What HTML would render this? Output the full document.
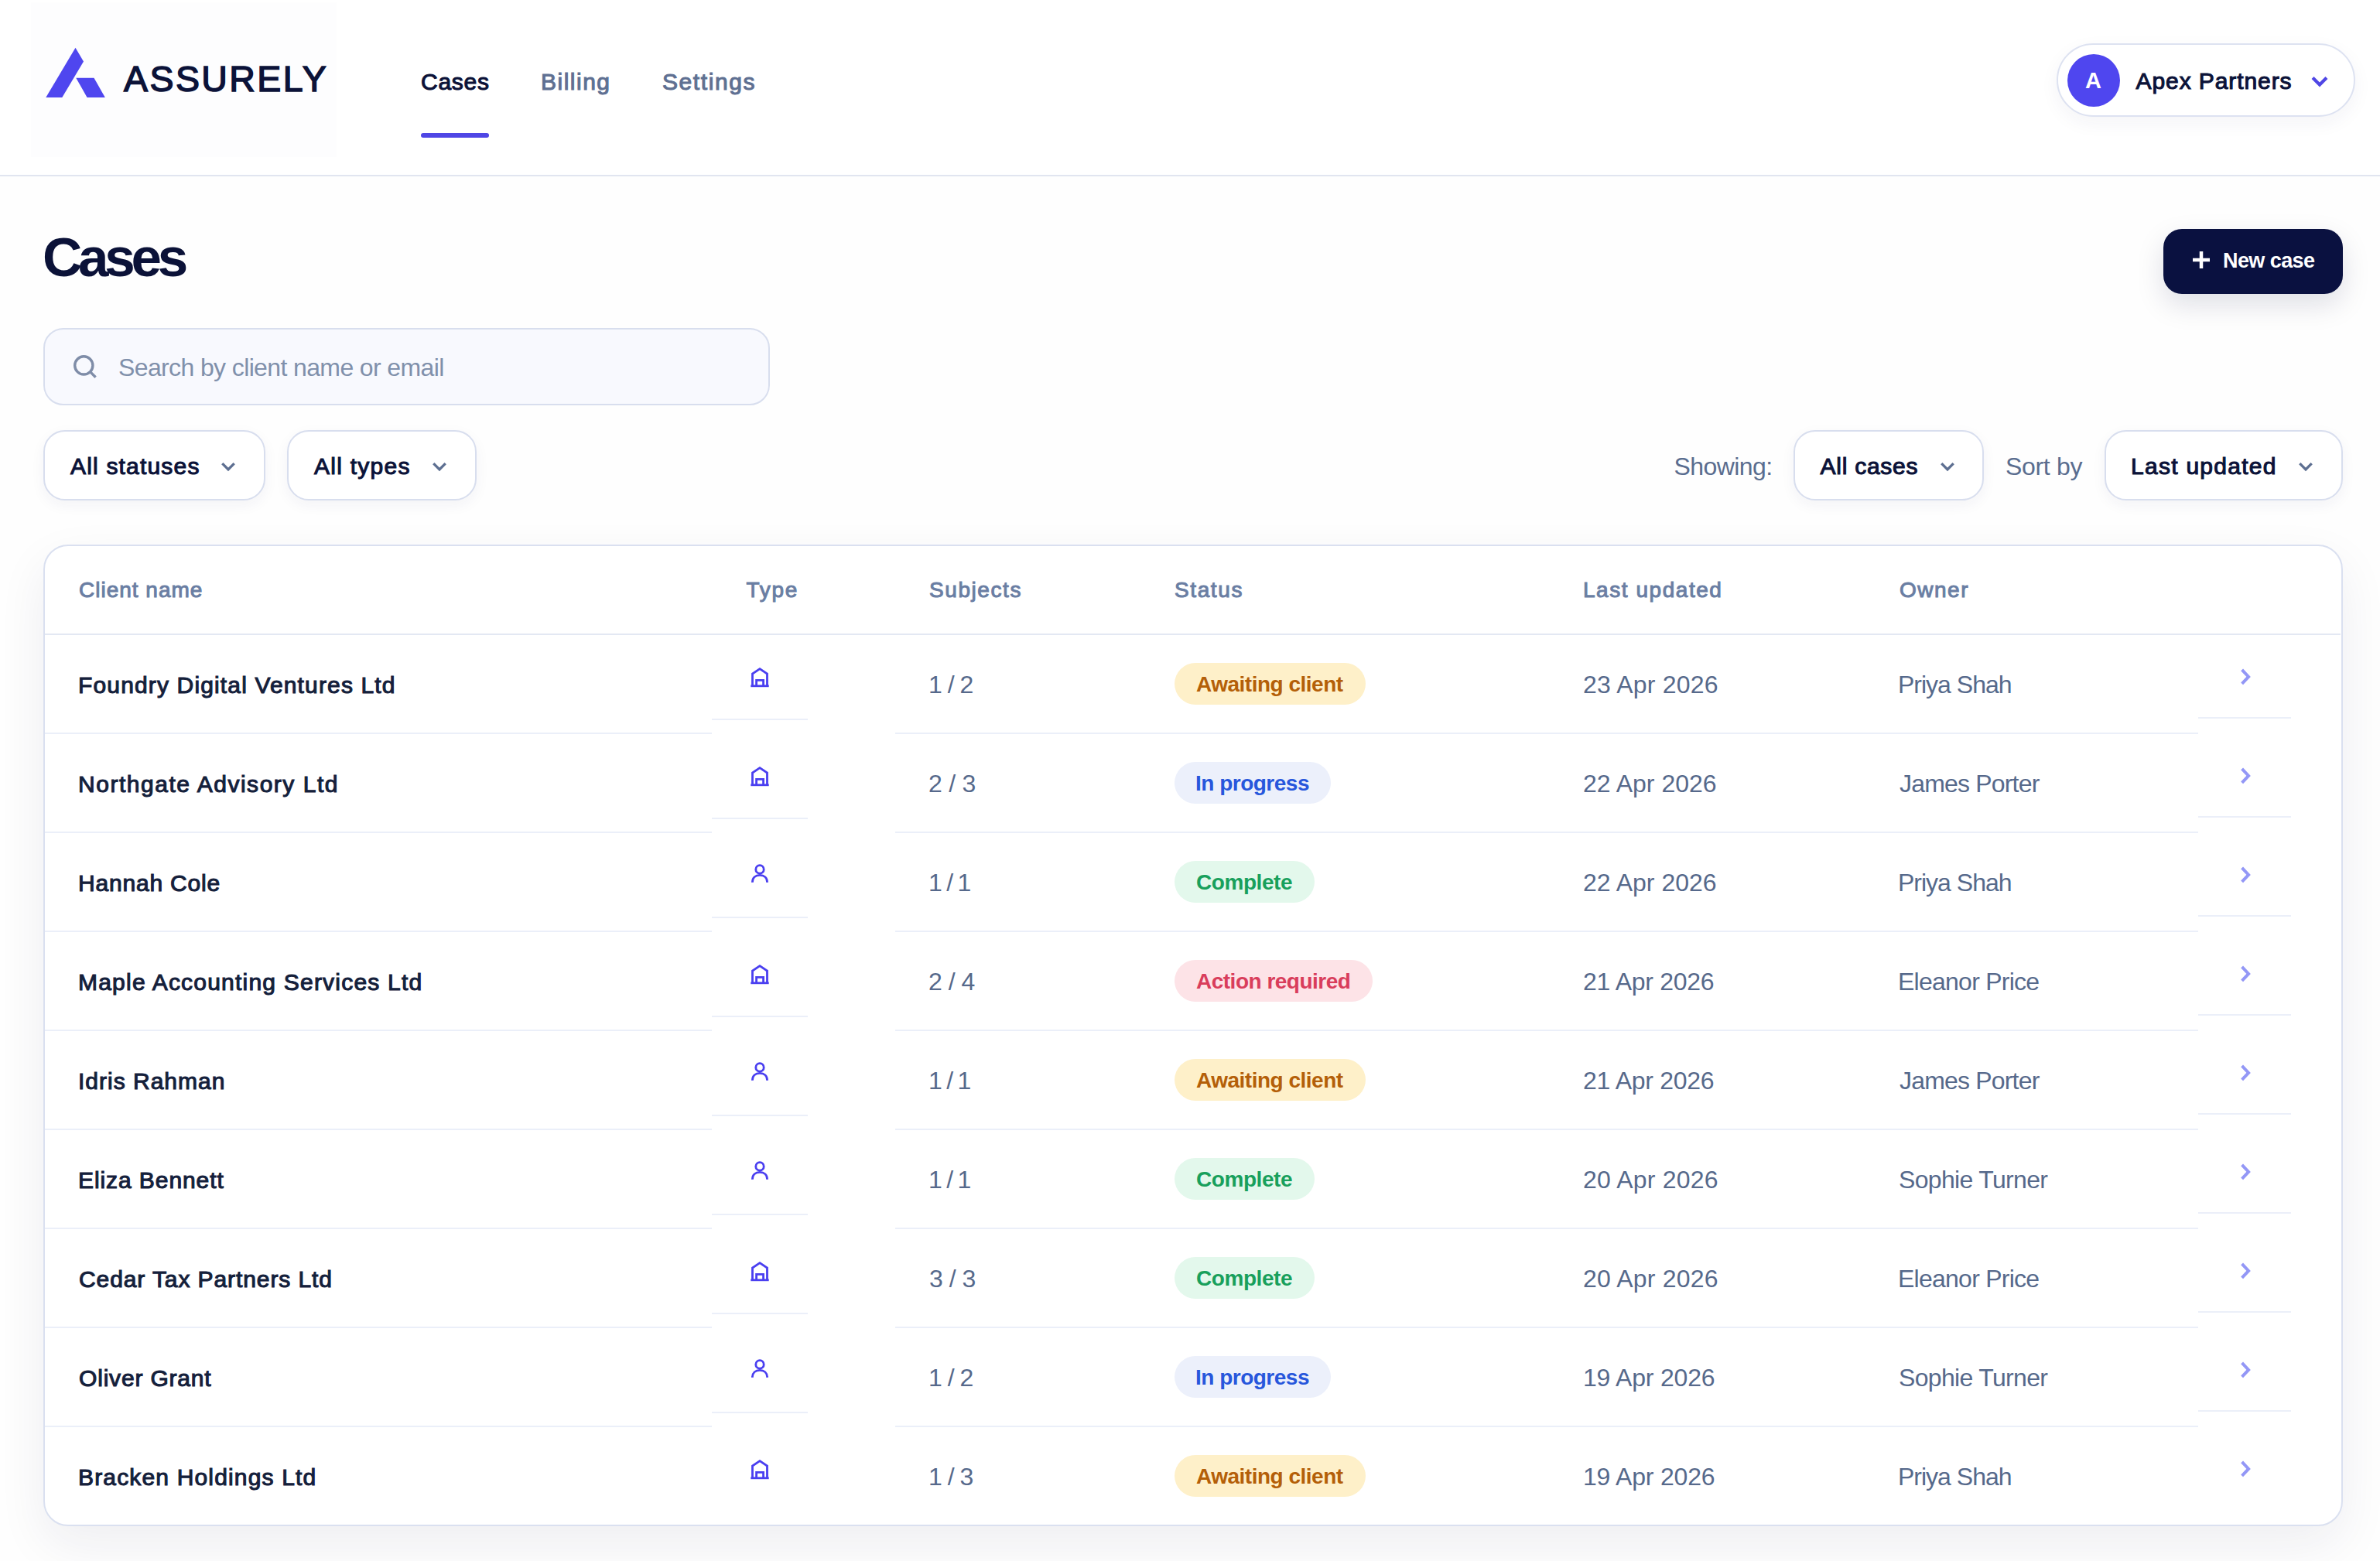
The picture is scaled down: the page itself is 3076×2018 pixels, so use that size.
<!DOCTYPE html>
<html><head><meta charset="utf-8"><title>Assurely - Cases</title>
<style>
html,body{margin:0;padding:0;}
body{width:3076px;height:2018px;position:relative;overflow:hidden;background:#fefefe;font-family:"Liberation Sans",sans-serif;}
.a{position:absolute;display:block;}
.t{position:absolute;white-space:nowrap;line-height:1;}
@media (max-width:1700px){html{zoom:0.5;}}
</style></head><body>
<div class="a" style="left:0;top:0;width:3076px;height:226px;background:#ffffff"></div>
<div class="a" style="left:0;top:226px;width:3076px;height:2px;background:#e1e5f0"></div>
<div class="a" style="left:40px;top:3px;width:395px;height:200px;background:#fdfdfe"></div>
<svg class="a" style="left:0;top:0" width="200" height="200" viewBox="0 0 200 200"><polygon points="59.3,126 97.5,61.8 108,79.5 80.3,126" fill="#4f46ef"/><polygon points="98.3,100.8 121.5,100.8 135.8,126 112.6,126" fill="#4f46ef"/></svg>
<div class="a" style="left:544px;top:172px;width:88px;height:6px;border-radius:3px;background:#4f46e5"></div>
<div class="a" style="left:2658px;top:56px;width:382px;height:91px;border:2px solid #dde2f1;border-radius:48px;background:#fff;box-shadow:0 8px 24px rgba(30,40,90,0.05)"></div>
<div class="a" style="left:2672px;top:70px;width:68px;height:68px;border-radius:50%;background:#4f46ef"></div>
<svg class="a" style="left:2980.0px;top:91.0px" width="36" height="29" viewBox="2980.00 91.00 36 29"><path d="M2989.05 100.49 L2998.00 109.43 L3006.95 100.49" fill="none" stroke="#4f46e5" stroke-width="4.2" stroke-linecap="butt" stroke-linejoin="miter"/></svg>
<div class="a" style="left:2796px;top:296px;width:232px;height:84px;border-radius:24px;background:#0a1140;box-shadow:0 14px 36px rgba(10,17,64,0.13)"></div>
<svg class="a" style="left:2834px;top:325px" width="22" height="22" viewBox="0 0 22 22"><path d="M11 0V22M0 11H22" stroke="#fff" stroke-width="4.5"/></svg>
<div class="a" style="left:56px;top:424px;width:935px;height:96px;border:2px solid #d8deee;border-radius:26px;background:#f8f9fe"></div>
<svg class="a" style="left:90px;top:454px" width="40" height="40" viewBox="0 0 40 40"><circle cx="18.3" cy="18.4" r="11.6" fill="none" stroke="#7f8da8" stroke-width="3.4"/><path d="M26.3 26.4 L33.6 33.7" stroke="#7f8da8" stroke-width="3.4"/></svg>
<div class="a" style="left:56.0px;top:556px;width:283.0px;height:87px;border:2px solid #d8deee;border-radius:28px;background:#fff;box-shadow:0 6px 18px rgba(30,40,90,0.05)"></div>
<div class="a" style="left:371.0px;top:556px;width:241.0px;height:87px;border:2px solid #d8deee;border-radius:28px;background:#fff;box-shadow:0 6px 18px rgba(30,40,90,0.05)"></div>
<div class="a" style="left:2318.0px;top:556px;width:242.0px;height:87px;border:2px solid #d8deee;border-radius:28px;background:#fff;box-shadow:0 6px 18px rgba(30,40,90,0.05)"></div>
<div class="a" style="left:2720.0px;top:556px;width:304.0px;height:87px;border:2px solid #d8deee;border-radius:28px;background:#fff;box-shadow:0 6px 18px rgba(30,40,90,0.05)"></div>
<svg class="a" style="left:278.0px;top:590.0px" width="34" height="27" viewBox="278.00 590.00 34 27"><path d="M287.30 599.17 L295.00 606.87 L302.70 599.17" fill="none" stroke="#5d6f91" stroke-width="3.3" stroke-linecap="butt" stroke-linejoin="miter"/></svg>
<svg class="a" style="left:551.0px;top:590.0px" width="34" height="27" viewBox="551.00 590.00 34 27"><path d="M560.30 599.17 L568.00 606.87 L575.70 599.17" fill="none" stroke="#5d6f91" stroke-width="3.3" stroke-linecap="butt" stroke-linejoin="miter"/></svg>
<svg class="a" style="left:2500.0px;top:590.0px" width="34" height="27" viewBox="2500.00 590.00 34 27"><path d="M2509.30 599.17 L2517.00 606.87 L2524.70 599.17" fill="none" stroke="#5d6f91" stroke-width="3.3" stroke-linecap="butt" stroke-linejoin="miter"/></svg>
<svg class="a" style="left:2963.0px;top:590.0px" width="34" height="27" viewBox="2963.00 590.00 34 27"><path d="M2972.30 599.17 L2980.00 606.87 L2987.70 599.17" fill="none" stroke="#5d6f91" stroke-width="3.3" stroke-linecap="butt" stroke-linejoin="miter"/></svg>
<div class="a" style="left:56px;top:704px;width:2968px;height:1265px;border:2px solid #dae0f0;border-radius:32px;background:#fff;box-shadow:0 24px 64px rgba(30,35,70,0.07)"></div>
<div class="a" style="left:58px;top:819px;width:2967px;height:2px;background:#e3e8f3"></div>
<div class="a" style="left:58px;top:947px;width:862px;height:2px;background:#ebeff9"></div>
<div class="a" style="left:1157px;top:947px;width:1684px;height:2px;background:#ebeff9"></div>
<div class="a" style="left:920px;top:929px;width:124px;height:2px;background:#ebeff9"></div>
<div class="a" style="left:2841px;top:927px;width:120px;height:2px;background:#ebeff9"></div>
<svg class="a" style="left:966px;top:859px" width="32" height="32" viewBox="0 0 32 32"><path d="M6.5 27.5 V12 L16 5.6 L25.5 12 V27.5" fill="none" stroke="#4a3ff0" stroke-width="2.8" stroke-linejoin="miter"/><path d="M4.3 27.8 H27.7" stroke="#4a3ff0" stroke-width="2.8"/><path d="M11.6 27.5 V20.4 H20.6 V27.5" fill="none" stroke="#4a3ff0" stroke-width="2.8"/></svg>
<div class="a" style="left:1518px;top:857px;width:247.0px;height:54px;border-radius:27px;background:#fef0c9"></div>
<svg class="a" style="left:2890px;top:859px" width="24" height="32" viewBox="0 0 24 32"><path d="M7.6 6.9 L16.1 15.9 L7.6 24.9" fill="none" stroke="#9397f6" stroke-width="4"/></svg>
<div class="a" style="left:58px;top:1075px;width:862px;height:2px;background:#ebeff9"></div>
<div class="a" style="left:1157px;top:1075px;width:1684px;height:2px;background:#ebeff9"></div>
<div class="a" style="left:920px;top:1057px;width:124px;height:2px;background:#ebeff9"></div>
<div class="a" style="left:2841px;top:1055px;width:120px;height:2px;background:#ebeff9"></div>
<svg class="a" style="left:966px;top:987px" width="32" height="32" viewBox="0 0 32 32"><path d="M6.5 27.5 V12 L16 5.6 L25.5 12 V27.5" fill="none" stroke="#4a3ff0" stroke-width="2.8" stroke-linejoin="miter"/><path d="M4.3 27.8 H27.7" stroke="#4a3ff0" stroke-width="2.8"/><path d="M11.6 27.5 V20.4 H20.6 V27.5" fill="none" stroke="#4a3ff0" stroke-width="2.8"/></svg>
<div class="a" style="left:1518px;top:985px;width:201.5px;height:54px;border-radius:27px;background:#ecf0fb"></div>
<svg class="a" style="left:2890px;top:987px" width="24" height="32" viewBox="0 0 24 32"><path d="M7.6 6.9 L16.1 15.9 L7.6 24.9" fill="none" stroke="#9397f6" stroke-width="4"/></svg>
<div class="a" style="left:58px;top:1203px;width:862px;height:2px;background:#ebeff9"></div>
<div class="a" style="left:1157px;top:1203px;width:1684px;height:2px;background:#ebeff9"></div>
<div class="a" style="left:920px;top:1185px;width:124px;height:2px;background:#ebeff9"></div>
<div class="a" style="left:2841px;top:1183px;width:120px;height:2px;background:#ebeff9"></div>
<svg class="a" style="left:966px;top:1115px" width="32" height="32" viewBox="0 0 32 32"><circle cx="16" cy="8.9" r="5.2" fill="none" stroke="#4a3ff0" stroke-width="2.8"/><path d="M6.4 25.8 C6.4 19.6 10.6 16.4 16 16.4 C21.4 16.4 25.6 19.6 25.6 25.8" fill="none" stroke="#4a3ff0" stroke-width="2.8"/></svg>
<div class="a" style="left:1518px;top:1113px;width:181.0px;height:54px;border-radius:27px;background:#e3f8ec"></div>
<svg class="a" style="left:2890px;top:1115px" width="24" height="32" viewBox="0 0 24 32"><path d="M7.6 6.9 L16.1 15.9 L7.6 24.9" fill="none" stroke="#9397f6" stroke-width="4"/></svg>
<div class="a" style="left:58px;top:1331px;width:862px;height:2px;background:#ebeff9"></div>
<div class="a" style="left:1157px;top:1331px;width:1684px;height:2px;background:#ebeff9"></div>
<div class="a" style="left:920px;top:1313px;width:124px;height:2px;background:#ebeff9"></div>
<div class="a" style="left:2841px;top:1311px;width:120px;height:2px;background:#ebeff9"></div>
<svg class="a" style="left:966px;top:1243px" width="32" height="32" viewBox="0 0 32 32"><path d="M6.5 27.5 V12 L16 5.6 L25.5 12 V27.5" fill="none" stroke="#4a3ff0" stroke-width="2.8" stroke-linejoin="miter"/><path d="M4.3 27.8 H27.7" stroke="#4a3ff0" stroke-width="2.8"/><path d="M11.6 27.5 V20.4 H20.6 V27.5" fill="none" stroke="#4a3ff0" stroke-width="2.8"/></svg>
<div class="a" style="left:1518px;top:1241px;width:256.0px;height:54px;border-radius:27px;background:#fde3e7"></div>
<svg class="a" style="left:2890px;top:1243px" width="24" height="32" viewBox="0 0 24 32"><path d="M7.6 6.9 L16.1 15.9 L7.6 24.9" fill="none" stroke="#9397f6" stroke-width="4"/></svg>
<div class="a" style="left:58px;top:1459px;width:862px;height:2px;background:#ebeff9"></div>
<div class="a" style="left:1157px;top:1459px;width:1684px;height:2px;background:#ebeff9"></div>
<div class="a" style="left:920px;top:1441px;width:124px;height:2px;background:#ebeff9"></div>
<div class="a" style="left:2841px;top:1439px;width:120px;height:2px;background:#ebeff9"></div>
<svg class="a" style="left:966px;top:1371px" width="32" height="32" viewBox="0 0 32 32"><circle cx="16" cy="8.9" r="5.2" fill="none" stroke="#4a3ff0" stroke-width="2.8"/><path d="M6.4 25.8 C6.4 19.6 10.6 16.4 16 16.4 C21.4 16.4 25.6 19.6 25.6 25.8" fill="none" stroke="#4a3ff0" stroke-width="2.8"/></svg>
<div class="a" style="left:1518px;top:1369px;width:247.0px;height:54px;border-radius:27px;background:#fef0c9"></div>
<svg class="a" style="left:2890px;top:1371px" width="24" height="32" viewBox="0 0 24 32"><path d="M7.6 6.9 L16.1 15.9 L7.6 24.9" fill="none" stroke="#9397f6" stroke-width="4"/></svg>
<div class="a" style="left:58px;top:1587px;width:862px;height:2px;background:#ebeff9"></div>
<div class="a" style="left:1157px;top:1587px;width:1684px;height:2px;background:#ebeff9"></div>
<div class="a" style="left:920px;top:1569px;width:124px;height:2px;background:#ebeff9"></div>
<div class="a" style="left:2841px;top:1567px;width:120px;height:2px;background:#ebeff9"></div>
<svg class="a" style="left:966px;top:1499px" width="32" height="32" viewBox="0 0 32 32"><circle cx="16" cy="8.9" r="5.2" fill="none" stroke="#4a3ff0" stroke-width="2.8"/><path d="M6.4 25.8 C6.4 19.6 10.6 16.4 16 16.4 C21.4 16.4 25.6 19.6 25.6 25.8" fill="none" stroke="#4a3ff0" stroke-width="2.8"/></svg>
<div class="a" style="left:1518px;top:1497px;width:181.0px;height:54px;border-radius:27px;background:#e3f8ec"></div>
<svg class="a" style="left:2890px;top:1499px" width="24" height="32" viewBox="0 0 24 32"><path d="M7.6 6.9 L16.1 15.9 L7.6 24.9" fill="none" stroke="#9397f6" stroke-width="4"/></svg>
<div class="a" style="left:58px;top:1715px;width:862px;height:2px;background:#ebeff9"></div>
<div class="a" style="left:1157px;top:1715px;width:1684px;height:2px;background:#ebeff9"></div>
<div class="a" style="left:920px;top:1697px;width:124px;height:2px;background:#ebeff9"></div>
<div class="a" style="left:2841px;top:1695px;width:120px;height:2px;background:#ebeff9"></div>
<svg class="a" style="left:966px;top:1627px" width="32" height="32" viewBox="0 0 32 32"><path d="M6.5 27.5 V12 L16 5.6 L25.5 12 V27.5" fill="none" stroke="#4a3ff0" stroke-width="2.8" stroke-linejoin="miter"/><path d="M4.3 27.8 H27.7" stroke="#4a3ff0" stroke-width="2.8"/><path d="M11.6 27.5 V20.4 H20.6 V27.5" fill="none" stroke="#4a3ff0" stroke-width="2.8"/></svg>
<div class="a" style="left:1518px;top:1625px;width:181.0px;height:54px;border-radius:27px;background:#e3f8ec"></div>
<svg class="a" style="left:2890px;top:1627px" width="24" height="32" viewBox="0 0 24 32"><path d="M7.6 6.9 L16.1 15.9 L7.6 24.9" fill="none" stroke="#9397f6" stroke-width="4"/></svg>
<div class="a" style="left:58px;top:1843px;width:862px;height:2px;background:#ebeff9"></div>
<div class="a" style="left:1157px;top:1843px;width:1684px;height:2px;background:#ebeff9"></div>
<div class="a" style="left:920px;top:1825px;width:124px;height:2px;background:#ebeff9"></div>
<div class="a" style="left:2841px;top:1823px;width:120px;height:2px;background:#ebeff9"></div>
<svg class="a" style="left:966px;top:1755px" width="32" height="32" viewBox="0 0 32 32"><circle cx="16" cy="8.9" r="5.2" fill="none" stroke="#4a3ff0" stroke-width="2.8"/><path d="M6.4 25.8 C6.4 19.6 10.6 16.4 16 16.4 C21.4 16.4 25.6 19.6 25.6 25.8" fill="none" stroke="#4a3ff0" stroke-width="2.8"/></svg>
<div class="a" style="left:1518px;top:1753px;width:201.5px;height:54px;border-radius:27px;background:#ecf0fb"></div>
<svg class="a" style="left:2890px;top:1755px" width="24" height="32" viewBox="0 0 24 32"><path d="M7.6 6.9 L16.1 15.9 L7.6 24.9" fill="none" stroke="#9397f6" stroke-width="4"/></svg>
<svg class="a" style="left:966px;top:1883px" width="32" height="32" viewBox="0 0 32 32"><path d="M6.5 27.5 V12 L16 5.6 L25.5 12 V27.5" fill="none" stroke="#4a3ff0" stroke-width="2.8" stroke-linejoin="miter"/><path d="M4.3 27.8 H27.7" stroke="#4a3ff0" stroke-width="2.8"/><path d="M11.6 27.5 V20.4 H20.6 V27.5" fill="none" stroke="#4a3ff0" stroke-width="2.8"/></svg>
<div class="a" style="left:1518px;top:1881px;width:247.0px;height:54px;border-radius:27px;background:#fef0c9"></div>
<svg class="a" style="left:2890px;top:1883px" width="24" height="32" viewBox="0 0 24 32"><path d="M7.6 6.9 L16.1 15.9 L7.6 24.9" fill="none" stroke="#9397f6" stroke-width="4"/></svg>
<div class="t" id="logo" style="left:160.00px;top:78.84px;font-size:46.5px;color:#0b1238;letter-spacing:2.429px;-webkit-text-stroke:1.5px #0b1238;">ASSURELY</div>
<div class="t" id="nav1" style="left:544.00px;top:90.66px;font-size:30px;-webkit-text-stroke:1.08px #0b1238;color:#0b1238;letter-spacing:0.750px;">Cases</div>
<div class="t" id="nav2" style="left:699.00px;top:90.66px;font-size:30px;-webkit-text-stroke:1.08px #5f7092;color:#5f7092;letter-spacing:1.500px;">Billing</div>
<div class="t" id="nav3" style="left:856.00px;top:90.66px;font-size:30px;-webkit-text-stroke:1.08px #5f7092;color:#5f7092;letter-spacing:1.571px;">Settings</div>
<div class="t" id="apex" style="left:2760.50px;top:90.36px;font-size:30px;-webkit-text-stroke:1.08px #0b1238;color:#0b1238;letter-spacing:0.917px;">Apex Partners</div>
<div class="t" id="avA" style="left:2695.00px;top:90.45px;font-size:29px;font-weight:700;color:#ffffff;letter-spacing:0.000px;">A</div>
<div class="t" id="title" style="left:55.00px;top:296.90px;font-size:71px;font-weight:700;color:#0b1238;letter-spacing:-5.250px;">Cases</div>
<div class="t" id="newcase" style="left:2873.00px;top:324.14px;font-size:27px;font-weight:700;color:#ffffff;letter-spacing:-0.571px;">New case</div>
<div class="t" id="ph" style="left:153.00px;top:458.91px;font-size:32px;color:#8090ab;letter-spacing:-0.621px;">Search by client name or email</div>
<div class="t" id="f1" style="left:91.00px;top:588.00px;font-size:30px;-webkit-text-stroke:1.08px #0b1238;color:#0b1238;letter-spacing:1.182px;">All statuses</div>
<div class="t" id="f2" style="left:406.00px;top:588.00px;font-size:30px;-webkit-text-stroke:1.08px #0b1238;color:#0b1238;letter-spacing:1.250px;">All types</div>
<div class="t" id="show" style="left:2163.50px;top:586.91px;font-size:32px;color:#5a6d8f;letter-spacing:-0.571px;">Showing:</div>
<div class="t" id="f3" style="left:2352.50px;top:588.00px;font-size:30px;-webkit-text-stroke:1.08px #0b1238;color:#0b1238;letter-spacing:0.750px;">All cases</div>
<div class="t" id="sort" style="left:2592.00px;top:586.91px;font-size:32px;color:#5a6d8f;letter-spacing:-0.333px;">Sort by</div>
<div class="t" id="f4" style="left:2754.00px;top:588.00px;font-size:30px;-webkit-text-stroke:1.08px #0b1238;color:#0b1238;letter-spacing:1.273px;">Last updated</div>
<div class="t" id="h1" style="left:102.00px;top:749.35px;font-size:28px;-webkit-text-stroke:1.01px #6a7ea3;color:#6a7ea3;letter-spacing:1.000px;">Client name</div>
<div class="t" id="h2" style="left:964.50px;top:749.35px;font-size:28px;-webkit-text-stroke:1.01px #6a7ea3;color:#6a7ea3;letter-spacing:1.667px;">Type</div>
<div class="t" id="h3" style="left:1201.00px;top:749.35px;font-size:28px;-webkit-text-stroke:1.01px #6a7ea3;color:#6a7ea3;letter-spacing:1.571px;">Subjects</div>
<div class="t" id="h4" style="left:1518.00px;top:749.35px;font-size:28px;-webkit-text-stroke:1.01px #6a7ea3;color:#6a7ea3;letter-spacing:1.600px;">Status</div>
<div class="t" id="h5" style="left:2046.00px;top:749.35px;font-size:28px;-webkit-text-stroke:1.01px #6a7ea3;color:#6a7ea3;letter-spacing:1.545px;">Last updated</div>
<div class="t" id="h6" style="left:2455.00px;top:749.35px;font-size:28px;-webkit-text-stroke:1.01px #6a7ea3;color:#6a7ea3;letter-spacing:1.500px;">Owner</div>
<div class="t" id="n0" style="left:101.00px;top:870.75px;font-size:30px;-webkit-text-stroke:1.08px #14203b;color:#14203b;letter-spacing:1.148px;">Foundry Digital Ventures Ltd</div>
<div class="t" id="s0" style="left:1200.00px;top:869.41px;font-size:32px;color:#56698b;letter-spacing:-1.000px;">1 / 2</div>
<div class="t" id="b0" style="left:1546.00px;top:871.40px;font-size:28px;font-weight:700;color:#b45f08;letter-spacing:-0.500px;">Awaiting client</div>
<div class="t" id="d0" style="left:2046.00px;top:869.41px;font-size:32px;color:#56698b;letter-spacing:0.200px;">23 Apr 2026</div>
<div class="t" id="o0" style="left:2453.00px;top:869.41px;font-size:32px;color:#56698b;letter-spacing:-1.000px;">Priya Shah</div>
<div class="t" id="n1" style="left:101.00px;top:998.76px;font-size:30px;-webkit-text-stroke:1.08px #14203b;color:#14203b;letter-spacing:1.524px;">Northgate Advisory Ltd</div>
<div class="t" id="s1" style="left:1200.00px;top:997.41px;font-size:32px;color:#56698b;letter-spacing:-0.250px;">2 / 3</div>
<div class="t" id="b1" style="left:1545.00px;top:999.40px;font-size:28px;font-weight:700;color:#2757dc;letter-spacing:-0.500px;">In progress</div>
<div class="t" id="d1" style="left:2046.00px;top:997.41px;font-size:32px;color:#56698b;letter-spacing:0.000px;">22 Apr 2026</div>
<div class="t" id="o1" style="left:2455.00px;top:997.41px;font-size:32px;color:#56698b;letter-spacing:-0.818px;">James Porter</div>
<div class="t" id="n2" style="left:101.00px;top:1126.76px;font-size:30px;-webkit-text-stroke:1.08px #14203b;color:#14203b;letter-spacing:0.800px;">Hannah Cole</div>
<div class="t" id="s2" style="left:1200.00px;top:1125.41px;font-size:32px;color:#56698b;letter-spacing:-1.750px;">1 / 1</div>
<div class="t" id="b2" style="left:1546.00px;top:1127.40px;font-size:28px;font-weight:700;color:#18a05c;letter-spacing:-0.429px;">Complete</div>
<div class="t" id="d2" style="left:2046.00px;top:1125.41px;font-size:32px;color:#56698b;letter-spacing:0.000px;">22 Apr 2026</div>
<div class="t" id="o2" style="left:2453.00px;top:1125.41px;font-size:32px;color:#56698b;letter-spacing:-1.000px;">Priya Shah</div>
<div class="t" id="n3" style="left:101.00px;top:1254.76px;font-size:30px;-webkit-text-stroke:1.08px #14203b;color:#14203b;letter-spacing:1.214px;">Maple Accounting Services Ltd</div>
<div class="t" id="s3" style="left:1200.00px;top:1253.41px;font-size:32px;color:#56698b;letter-spacing:-0.500px;">2 / 4</div>
<div class="t" id="b3" style="left:1546.00px;top:1255.40px;font-size:28px;font-weight:700;color:#d93d5b;letter-spacing:-0.500px;">Action required</div>
<div class="t" id="d3" style="left:2046.00px;top:1253.41px;font-size:32px;color:#56698b;letter-spacing:-0.300px;">21 Apr 2026</div>
<div class="t" id="o3" style="left:2453.00px;top:1253.41px;font-size:32px;color:#56698b;letter-spacing:-0.750px;">Eleanor Price</div>
<div class="t" id="n4" style="left:101.00px;top:1382.76px;font-size:30px;-webkit-text-stroke:1.08px #14203b;color:#14203b;letter-spacing:1.000px;">Idris Rahman</div>
<div class="t" id="s4" style="left:1200.00px;top:1381.41px;font-size:32px;color:#56698b;letter-spacing:-1.750px;">1 / 1</div>
<div class="t" id="b4" style="left:1546.00px;top:1383.40px;font-size:28px;font-weight:700;color:#b45f08;letter-spacing:-0.500px;">Awaiting client</div>
<div class="t" id="d4" style="left:2046.00px;top:1381.41px;font-size:32px;color:#56698b;letter-spacing:-0.300px;">21 Apr 2026</div>
<div class="t" id="o4" style="left:2455.00px;top:1381.41px;font-size:32px;color:#56698b;letter-spacing:-0.818px;">James Porter</div>
<div class="t" id="n5" style="left:101.00px;top:1510.76px;font-size:30px;-webkit-text-stroke:1.08px #14203b;color:#14203b;letter-spacing:0.917px;">Eliza Bennett</div>
<div class="t" id="s5" style="left:1200.00px;top:1509.41px;font-size:32px;color:#56698b;letter-spacing:-1.750px;">1 / 1</div>
<div class="t" id="b5" style="left:1546.00px;top:1511.40px;font-size:28px;font-weight:700;color:#18a05c;letter-spacing:-0.429px;">Complete</div>
<div class="t" id="d5" style="left:2046.00px;top:1509.41px;font-size:32px;color:#56698b;letter-spacing:0.200px;">20 Apr 2026</div>
<div class="t" id="o5" style="left:2454.00px;top:1509.41px;font-size:32px;color:#56698b;letter-spacing:-0.667px;">Sophie Turner</div>
<div class="t" id="n6" style="left:102.00px;top:1638.76px;font-size:30px;-webkit-text-stroke:1.08px #14203b;color:#14203b;letter-spacing:0.905px;">Cedar Tax Partners Ltd</div>
<div class="t" id="s6" style="left:1201.00px;top:1637.41px;font-size:32px;color:#56698b;letter-spacing:-0.500px;">3 / 3</div>
<div class="t" id="b6" style="left:1546.00px;top:1639.40px;font-size:28px;font-weight:700;color:#18a05c;letter-spacing:-0.429px;">Complete</div>
<div class="t" id="d6" style="left:2046.00px;top:1637.41px;font-size:32px;color:#56698b;letter-spacing:0.200px;">20 Apr 2026</div>
<div class="t" id="o6" style="left:2453.00px;top:1637.41px;font-size:32px;color:#56698b;letter-spacing:-0.750px;">Eleanor Price</div>
<div class="t" id="n7" style="left:102.00px;top:1766.76px;font-size:30px;-webkit-text-stroke:1.08px #14203b;color:#14203b;letter-spacing:0.818px;">Oliver Grant</div>
<div class="t" id="s7" style="left:1200.00px;top:1765.41px;font-size:32px;color:#56698b;letter-spacing:-1.000px;">1 / 2</div>
<div class="t" id="b7" style="left:1545.00px;top:1767.40px;font-size:28px;font-weight:700;color:#2757dc;letter-spacing:-0.500px;">In progress</div>
<div class="t" id="d7" style="left:2046.00px;top:1765.41px;font-size:32px;color:#56698b;letter-spacing:-0.200px;">19 Apr 2026</div>
<div class="t" id="o7" style="left:2454.00px;top:1765.41px;font-size:32px;color:#56698b;letter-spacing:-0.667px;">Sophie Turner</div>
<div class="t" id="n8" style="left:101.00px;top:1894.76px;font-size:30px;-webkit-text-stroke:1.08px #14203b;color:#14203b;letter-spacing:1.158px;">Bracken Holdings Ltd</div>
<div class="t" id="s8" style="left:1200.00px;top:1893.41px;font-size:32px;color:#56698b;letter-spacing:-1.000px;">1 / 3</div>
<div class="t" id="b8" style="left:1546.00px;top:1895.40px;font-size:28px;font-weight:700;color:#b45f08;letter-spacing:-0.500px;">Awaiting client</div>
<div class="t" id="d8" style="left:2046.00px;top:1893.41px;font-size:32px;color:#56698b;letter-spacing:-0.200px;">19 Apr 2026</div>
<div class="t" id="o8" style="left:2453.00px;top:1893.41px;font-size:32px;color:#56698b;letter-spacing:-1.000px;">Priya Shah</div>
</body></html>
